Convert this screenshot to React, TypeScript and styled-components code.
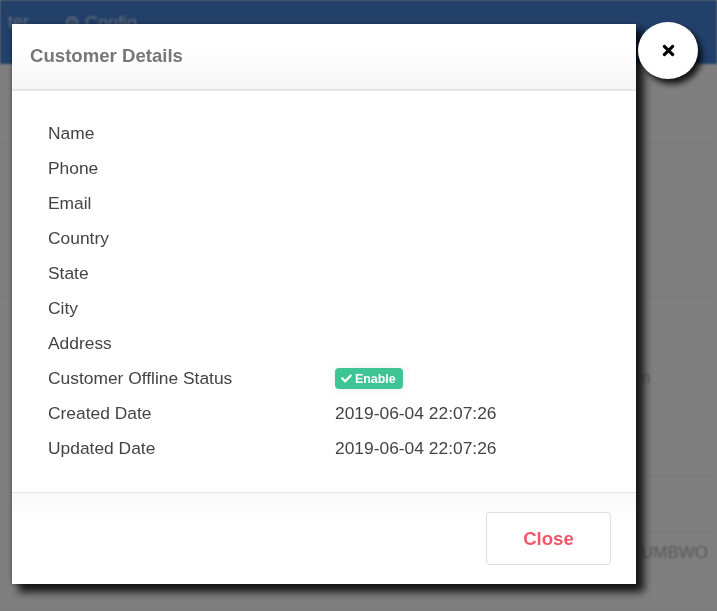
import React from "react";
import styled, { createGlobalStyle } from "styled-components";

const GlobalStyle = createGlobalStyle`
    html, body {
        margin: 0;
        padding: 0;
        background: #ffffff;
        font-family: "Liberation Sans", Arial, sans-serif;
    }
`;

// page behind the modal (blurred by the backdrop)
const Page = styled.div`
    width: 100%;
    min-height: 611px;
    overflow: hidden;
    filter: blur(1.2px);
`;

const NavBar = styled.div`
    display: flex;
    align-items: flex-start;
    gap: 35px;
    height: 64px;
    padding: 12px 0 0 8px;
    box-sizing: border-box;
    background-color: #4480d4;
`;

const NavItem = styled.span`
    color: #ffffff;
    font-size: 18px;
    opacity: 0.7;
`;

const TableRow = styled.div<{ h: number }>`
    display: flex;
    align-items: flex-start;
    height: ${({ h }) => h}px;
    box-sizing: border-box;
    border-bottom: 1px solid #f0f0f0;
    padding: 10px 0 0 641px;
    font-size: 17px;
    color: #b0b0b0;
    white-space: nowrap;
    overflow: hidden;
`;

const CellText = styled.span`
    flex: 1;
`;

const Overlay = styled.div`
    position: fixed;
    inset: 0;
    background: rgba(0, 0, 0, 0.5);
    padding: 24px 0 0 12px;
`;

const Modal = styled.div`
    position: relative;
    width: 624px;
    background: #ffffff;
    border-radius: 2px;
    box-shadow: 7px 7px 9px 1px rgba(0, 0, 0, 0.85), -1px 0 4px rgba(0, 0, 0, 0.25);
`;

const ModalHeader = styled.div`
    display: flex;
    align-items: center;
    height: 65px;
    padding: 0 18px;
    background: linear-gradient(#ffffff 40%, #f5f5f5);
    border-bottom: 2px solid #e4e7ea;
`;

const ModalTitle = styled.h3`
    margin: 0;
    font-size: 18.6px;
    font-weight: bold;
    color: #777777;
    padding-bottom: 2px;
`;

const CloseCircle = styled.button`
    position: absolute;
    top: -2px;
    right: -62px;
    width: 60px;
    height: 57px;
    border-radius: 50%;
    border: none;
    background: #ffffff;
    box-shadow: 4px 5px 6px rgba(0, 0, 0, 0.85);
    display: flex;
    align-items: center;
    justify-content: center;
    padding: 0;
`;

const ModalBody = styled.div`
    padding: 24px 36px 27px;
    border-bottom: 1px solid #e5e5e5;
`;

const DetailRow = styled.div`
    display: grid;
    grid-template-columns: 287px 1fr;
    align-items: center;
    height: 35px;
    padding-top: 2px;
    box-sizing: border-box;
    font-size: 17.4px;
    color: #444444;
`;

const Badge = styled.span`
    display: inline-flex;
    align-items: center;
    gap: 3px;
    height: 21px;
    padding: 0 7px 0 6px;
    border-radius: 4px;
    background: #3ec495;
    color: #ffffff;
    font-size: 12.4px;
    font-weight: bold;
    box-shadow: 0 0 12px rgba(0, 0, 0, 0.07);
    justify-self: start;
`;

const ModalFooter = styled.div`
    display: flex;
    justify-content: flex-end;
    padding: 19px 25px 19px;
    background: linear-gradient(#f9f9f9, #ffffff 30%);
`;

const CloseButton = styled.button`
    width: 125px;
    height: 53px;
    border: 1px solid #dddddd;
    border-radius: 4px;
    background: #ffffff;
    color: #f4566a;
    font-family: "Liberation Sans", Arial, sans-serif;
    font-size: 18.6px;
    font-weight: bold;
    cursor: pointer;
`;

const rows = [41, 38, 44, 53, 58, 60, 59, 60, 56, 78];
const rowText: Record<number, string> = { 6: "n", 9: "UMBWO" };

const details: { label: string; value?: string; badge?: boolean }[] = [
    { label: "Name" },
    { label: "Phone" },
    { label: "Email" },
    { label: "Country" },
    { label: "State" },
    { label: "City" },
    { label: "Address" },
    { label: "Customer Offline Status", badge: true },
    { label: "Created Date", value: "2019-06-04 22:07:26" },
    { label: "Updated Date", value: "2019-06-04 22:07:26" },
];

const CheckIcon = () => (
    <svg width="11" height="11" viewBox="0 0 512 512">
        <path
            fill="#ffffff"
            d="M173.9 439.4L7.5 273c-10-10-10-26.2 0-36.2l36.2-36.2c10-10 26.2-10 36.2 0L192 312.7 432.1 72.6c10-10 26.2-10 36.2 0l36.2 36.2c10 10 10 26.2 0 36.2L210.1 439.4c-10 10-26.2 10-36.2 0z"
        />
    </svg>
);

const TimesIcon = () => (
    <svg width="17" height="17" viewBox="0 0 352 512" style={{ marginLeft: 1 }}>
        <path
            fill="#000000"
            d="M242.7 256l100.1-100.1c12.3-12.3 12.3-32.2 0-44.5l-22.2-22.2c-12.3-12.3-32.2-12.3-44.5 0L176 189.3 75.9 89.2c-12.3-12.3-32.2-12.3-44.5 0L9.2 111.4c-12.3 12.3-12.3 32.2 0 44.5L109.3 256 9.2 356.1c-12.3 12.3-12.3 32.2 0 44.5l22.2 22.2c12.3 12.3 32.2 12.3 44.5 0L176 322.7l100.1 100.1c12.3 12.3 32.2 12.3 44.5 0l22.2-22.2c12.3-12.3 12.3-32.2 0-44.5L242.7 256z"
        />
    </svg>
);

export default function App() {
    return (
        <>
            <GlobalStyle />
            <Page>
                <NavBar>
                    <NavItem>ter</NavItem>
                    <NavItem>⚙ Config</NavItem>
                </NavBar>
                {rows.map((h, i) => (
                    <TableRow key={i} h={h}>
                        <CellText>{rowText[i] ?? ""}</CellText>
                    </TableRow>
                ))}
            </Page>
            <Overlay>
                <Modal>
                    <ModalHeader>
                        <ModalTitle>Customer Details</ModalTitle>
                    </ModalHeader>
                    <CloseCircle aria-label="close">
                        <TimesIcon />
                    </CloseCircle>
                    <ModalBody>
                        {details.map((d) => (
                            <DetailRow key={d.label}>
                                <span>{d.label}</span>
                                {d.badge ? (
                                    <Badge>
                                        <CheckIcon />
                                        Enable
                                    </Badge>
                                ) : (
                                    <span>{d.value ?? ""}</span>
                                )}
                            </DetailRow>
                        ))}
                    </ModalBody>
                    <ModalFooter>
                        <CloseButton>Close</CloseButton>
                    </ModalFooter>
                </Modal>
            </Overlay>
        </>
    );
}
